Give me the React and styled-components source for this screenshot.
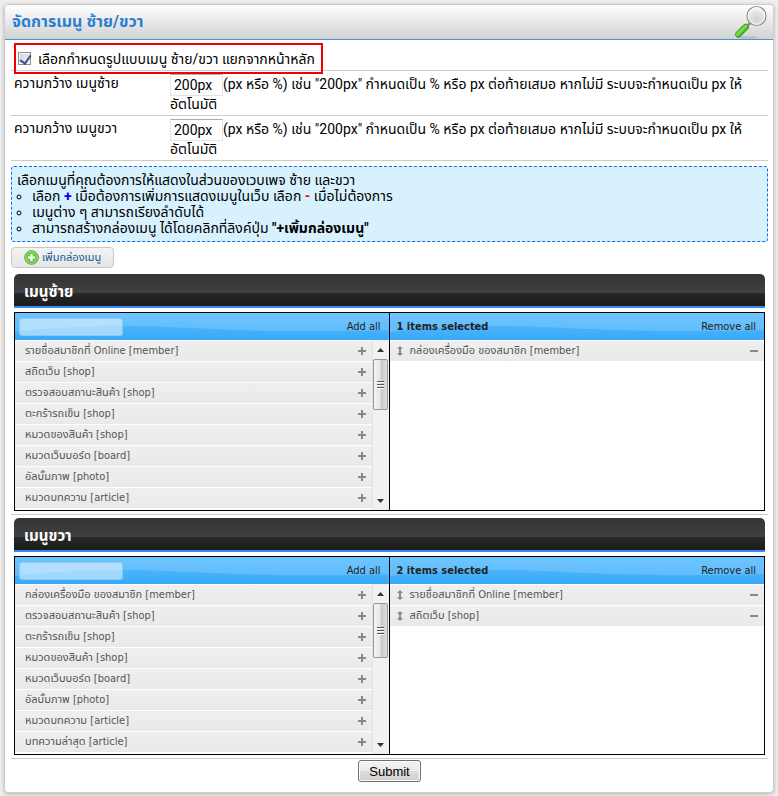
import { useState } from 'react';
import styled, { createGlobalStyle } from 'styled-components';

const leftItems = [
  'รายชื่อสมาชิกที่ Online [member]',
  'สถิตเว็บ [shop]',
  'ตรวจสอบสถานะสินค้า [shop]',
  'ตะกร้ารถเข็น [shop]',
  'หมวดของสินค้า [shop]',
  'หมวดเว็บบอร์ด [board]',
  'อัลบั้มภาพ [photo]',
  'หมวดบทความ [article]',
];

const rightItems = [
  'กล่องเครื่องมือ ของสมาชิก [member]',
  'ตรวจสอบสถานะสินค้า [shop]',
  'ตะกร้ารถเข็น [shop]',
  'หมวดของสินค้า [shop]',
  'หมวดเว็บบอร์ด [board]',
  'อัลบั้มภาพ [photo]',
  'หมวดบทความ [article]',
  'บทความล่าสุด [article]',
];

const SearchIcon = () => (
  <svg width="34" height="34" viewBox="0 0 34 34" aria-hidden="true">
    <defs>
      <radialGradient id="lens" cx="0.5" cy="0.7" r="0.7">
        <stop offset="0" stopColor="#d2d2d2" />
        <stop offset="0.6" stopColor="#e6e6e6" />
        <stop offset="1" stopColor="#ffffff" />
      </radialGradient>
      <linearGradient id="handle" x1="0.3" y1="0.3" x2="0.7" y2="0.7">
        <stop offset="0" stopColor="#3aa818" />
        <stop offset="0.4" stopColor="#86e650" />
        <stop offset="1" stopColor="#2c8a10" />
      </linearGradient>
    </defs>
    <ellipse cx="13" cy="32.500" rx="11" ry="1" fill="#b8b8b8" />
    <path d="M12 22 L17 17" stroke="#8a8a8a" strokeWidth="2.500" />
    <path d="M2.2 27.500 L10 19.600 Q11.800 18.300 13.700 20 Q15.300 21.800 14 23.600 L6.300 31.400 Q4 33 2.200 31.400 Q.6 29.600 2.200 27.500Z" fill="url(#handle)" stroke="#3b9618" strokeWidth="1" />
    <circle cx="22.500" cy="11" r="9.500" fill="url(#lens)" stroke="#8c8c8c" strokeWidth="1.200" />
    <circle cx="22.500" cy="11" r="8.300" fill="none" stroke="#f8f8f8" strokeWidth="1" />
  </svg>
);

const AddIcon = () => (
  <svg width="15" height="15" viewBox="0 0 15 15" aria-hidden="true">
    <circle cx="7.500" cy="7.500" r="6.800" fill="#6cc644" stroke="#4fa83a" />
    <circle cx="7.500" cy="7.500" r="5.700" fill="none" stroke="#a4e382" />
    <path d="M7.500 4v7M4 7.500h7" stroke="#fff" strokeWidth="2.200" />
  </svg>
);

const Wave = () => (
  <WaveSvg viewBox="0 0 374 27" preserveAspectRatio="none" aria-hidden="true">
    <defs>
      <linearGradient id="wave" x1="0" y1="0" x2="0" y2="1">
        <stop offset="0" stopColor="#4bb4f9" />
        <stop offset="1" stopColor="#38a9f9" />
      </linearGradient>
    </defs>
    <path d="M0 19 C20 16 60 13 110 13 C160 13 200 18 290 18 C330 18 350 18 374 17 V27 H0Z" fill="url(#wave)" />
  </WaveSvg>
);

const PlusIcon = () => (
  <svg width="8" height="8" viewBox="0 0 8 8" aria-hidden="true">
    <path d="M3 0h2v3h3v2H5v3H3V5H0V3h3z" fill="#888" />
  </svg>
);

const MinusIcon = () => (
  <svg width="8" height="8" viewBox="0 0 8 8" aria-hidden="true">
    <path d="M0 3h8v2H0z" fill="#888" />
  </svg>
);

const SortIcon = () => (
  <svg width="6" height="10" viewBox="0 0 6 10" aria-hidden="true">
    <path d="M3 0L6 3H4v4h2L3 10L0 7h2V3H0z" fill="#888" />
  </svg>
);

const ScrollBar = ({ thumb }) => (
  <Track>
    <Arrow>
      <svg width="7" height="4" viewBox="0 0 7 4"><path d="M0 4L3.500 0L7 4z" fill="#333" /></svg>
    </Arrow>
    <Thumb $height={thumb}>
      <i />
      <i />
      <i />
    </Thumb>
    <Spacer />
    <Arrow>
      <svg width="7" height="4" viewBox="0 0 7 4"><path d="M0 0h7L3.500 4z" fill="#333" /></svg>
    </Arrow>
  </Track>
);

const MenuPicker = ({ title, available, selected, thumb }) => (
  <Section>
    <SectionTitle>{title}</SectionTitle>
    <Picker>
      <Pane>
        <PaneHead>
          <Wave />
          <SearchInput type="text" aria-label={title} />
          <HeadLink href="#">Add all</HeadLink>
        </PaneHead>
        <PaneBody>
          <List>
            {available.map((item) => (
              <Item key={item}>
                <span>{item}</span>
                <IconButton type="button" aria-label={item}><PlusIcon /></IconButton>
              </Item>
            ))}
          </List>
          <ScrollBar thumb={thumb} />
        </PaneBody>
      </Pane>
      <Pane>
        <PaneHead>
          <Wave />
          <Count>{selected.length} items selected</Count>
          <HeadLink href="#">Remove all</HeadLink>
        </PaneHead>
        <PaneBody>
          <List>
            {selected.map((item) => (
              <Item key={item} $sortable>
                <SortIcon />
                <span>{item}</span>
                <IconButton type="button" aria-label={item}><MinusIcon /></IconButton>
              </Item>
            ))}
          </List>
        </PaneBody>
      </Pane>
    </Picker>
  </Section>
);

const WidthRow = ({ id, label }) => {
  const [width, setWidth] = useState('200px');

  return (
    <FormRow>
      <label htmlFor={id}>{label}</label>
      <div>
        <WidthInput id={id} value={width} onChange={(e) => setWidth(e.target.value)} />
        (px หรือ %) เช่น "200px" กำหนดเป็น % หรือ px ต่อท้ายเสมอ หากไม่มี ระบบจะกำหนดเป็น px ให้อัตโนมัติ
      </div>
    </FormRow>
  );
};

const App = () => {
  const [separate, setSeparate] = useState(true);

  return (
    <>
      <GlobalStyle />
      <Panel>
        <PanelHead>
          <h1>จัดการเมนู ซ้าย/ขวา</h1>
          <SearchIcon />
        </PanelHead>
        <Content>
          <CheckRow>
            <CheckLabel>
              <Checkbox type="checkbox" checked={separate} onChange={(e) => setSeparate(e.target.checked)} />
              เลือกกำหนดรูปแบบเมนู ซ้าย/ขวา แยกจากหน้าหลัก
            </CheckLabel>
          </CheckRow>
          <WidthRow id="width-left" label="ความกว้าง เมนูซ้าย" />
          <WidthRow id="width-right" label="ความกว้าง เมนูขวา" />
          <Notice>
            <p>เลือกเมนูที่คุณต้องการให้แสดงในส่วนของเวบเพจ ซ้าย และขวา</p>
            <ul>
              <li>เลือก <Mark $color="#0000ff">+</Mark> เมื่อต้องการเพิ่มการแสดงเมนูในเว็บ เลือก <Mark $color="#ff0000">-</Mark> เมื่อไม่ต้องการ</li>
              <li>เมนูต่าง ๆ สามารถเรียงลำดับได้</li>
              <li>สามารถสร้างกล่องเมนู ได้โดยคลิกที่ลิงค์ปุ่ม <b>"+เพิ้มกล่องเมนู"</b></li>
            </ul>
          </Notice>
          <AddButton type="button">
            <AddIcon />
            เพิ่มกล่องเมนู
          </AddButton>
          <MenuPicker title="เมนูซ้าย" available={leftItems} selected={['กล่องเครื่องมือ ของสมาชิก [member]']} thumb={51} />
          <MenuPicker title="เมนูขวา" available={rightItems} selected={['รายชื่อสมาชิกที่ Online [member]', 'สถิตเว็บ [shop]']} thumb={55} />
          <Submit type="submit">Submit</Submit>
        </Content>
      </Panel>
    </>
  );
};

export default App;

const GlobalStyle = createGlobalStyle`
  * {
    box-sizing: border-box;
  }

  body {
    margin: 0;
    padding: 4px 4px 3px;
    background: #efefef;
    color: #000;
    font-family: Roboto, "Noto Sans Thai", sans-serif;
    font-size: 14px;
    line-height: 16px;
  }

  button, input {
    font-family: inherit;
  }
`;

const Panel = styled.div`
  background: #fff;
  border: 1px solid #ccc;
  border-radius: 4px;
  box-shadow: 0 1px 4px #00000040;
`;

const PanelHead = styled.header`
  display: flex;
  align-items: center;
  justify-content: space-between;
  height: 35px;
  padding: 0 5px 0 7px;
  border-bottom: 1px solid #3c96e8;
  border-radius: 4px 4px 0 0;
  background: linear-gradient(#fff, #d2d2d2);

  & h1 {
    margin: 0;
    color: #2a7fd0;
    font-size: 16px;
    font-weight: bold;
    line-height: 24px;
  }
`;

const Content = styled.form`
  display: flex;
  flex-direction: column;
  padding: 0 5px 10px 6px;
`;

const CheckRow = styled.div`
  height: 31px;
  padding: 3px;
  border-bottom: 1px solid #ccc;
`;

const CheckLabel = styled.label`
  position: relative;
  display: inline-flex;
  align-items: center;
  gap: 7px;
  height: 31px;
  padding: 0 6px 0 2px;
  border: 2px solid #f00000;
`;

const Checkbox = styled.input`
  appearance: none;
  width: 13px;
  height: 13px;
  margin: 0;
  border: 1px solid #8e8f8f;
  background: linear-gradient(135deg, #cfd3d8, #f6f6f6);
  box-shadow: inset 0 0 0 1px #f4f4f4;

  &:checked::after {
    content: "";
    display: block;
    width: 5px;
    height: 9px;
    margin: 0 0 0 3px;
    border: solid #3b4f92;
    border-width: 0 2px 2px 0;
    transform: rotate(35deg);
  }
`;

const FormRow = styled.div`
  display: grid;
  grid-template-columns: 156px 1fr;
  height: 45px;
  padding: 3px;
  border-bottom: 1px solid #ccc;

  & > label {
    padding-top: 1px;
  }
`;

const WidthInput = styled.input`
  width: 53px;
  height: 22px;
  padding: 0 3px;
  border: 1px solid #e2e3ea;
  border-top-color: #abadb3;
  font-size: 14px;
  vertical-align: middle;
`;

const Notice = styled.div`
  margin-top: 5px;
  padding: 5px;
  border: 1px dashed #0a6cf0;
  border-radius: 3px;
  background: #d7f2fe;

  & p {
    margin: 0;
  }

  & ul {
    margin: 0;
    padding-left: 15px;
    list-style: circle;
  }
`;

const Mark = styled.b`
  color: ${({ $color }) => $color};
`;

const AddButton = styled.button`
  display: flex;
  align-items: center;
  align-self: flex-start;
  gap: 3px;
  height: 21px;
  margin: 5px 0 6px;
  padding: 0 12px;
  border: 1px solid #c8c8c8;
  border-radius: 4px;
  background: linear-gradient(#f3f3f3, #e6e6e6);
  color: #0f5a9c;
  font-size: 11px;
`;

const Section = styled.section`
  margin-bottom: 3px;
  padding: 0 3px 3px;
  border-bottom: 1px solid #ccc;
`;

const SectionTitle = styled.h2`
  height: 34px;
  margin: 0 0 4px;
  padding: 2px 10px 0;
  border-bottom: 2px solid #3a87f0;
  border-radius: 5px 5px 0 0;
  background: linear-gradient(#333, #404040 58%, #282828 60%, #1b1b1b);
  color: #fff;
  font-size: 15px;
  font-weight: bold;
  line-height: 32px;
`;

const Picker = styled.div`
  display: grid;
  grid-template-columns: 1fr 1fr;
  height: 199px;
  border: 1px solid #000;
  font-family: Tahoma, "DejaVu Sans Condensed", "Noto Sans Thai", sans-serif;
`;

const Pane = styled.div`
  display: flex;
  flex-direction: column;
  min-width: 0;
  overflow: hidden;

  &:first-child {
    border-right: 1px solid #000;
  }
`;

const PaneHead = styled.div`
  position: relative;
  display: flex;
  align-items: center;
  justify-content: space-between;
  height: 27px;
  padding: 0 8px 0 4px;
  background: linear-gradient(#6fc4fe, #58b9fa);
  font-size: 11px;
`;

const WaveSvg = styled.svg`
  position: absolute;
  inset: 0;
  width: 100%;
  height: 100%;
`;

const SearchInput = styled.input`
  position: relative;
  width: 104px;
  height: 18px;
  padding: 0 4px;
  border: 1px solid #8cc8f0;
  border-radius: 3px;
  background: #ffffff80;
`;

const HeadLink = styled.a`
  position: relative;
  color: #222;
  text-decoration: none;
`;

const Count = styled.strong`
  position: relative;
  padding-left: 3px;
  color: #222;
`;

const PaneBody = styled.div`
  display: flex;
  flex: 1;
  min-height: 0;
`;

const List = styled.ul`
  flex: 1;
  min-width: 0;
  margin: 0;
  padding: 0;
  list-style: none;
`;

const Item = styled.li`
  display: flex;
  align-items: center;
  gap: 7px;
  height: 21px;
  padding: 0 6px 0 ${({ $sortable }) => ($sortable ? 7 : 10)}px;
  border-top: 1px solid #fff;
  background: linear-gradient(#efefef, #e9e9e9);
  color: #555;
  font-size: 11px;
  white-space: nowrap;

  & span {
    flex: 1;
  }
`;

const IconButton = styled.button`
  display: flex;
  padding: 0;
  border: 0;
  background: none;
`;

const Track = styled.div`
  display: flex;
  flex-direction: column;
  width: 17px;
  border-left: 1px solid #e3e3e3;
  background: #f1f1f1;
`;

const Arrow = styled.div`
  display: flex;
  align-items: center;
  justify-content: center;
  height: 19px;
`;

const Thumb = styled.div`
  display: flex;
  flex-direction: column;
  align-items: center;
  justify-content: center;
  gap: 1px;
  height: ${({ $height }) => $height}px;
  margin-right: 1px;
  border: 1px solid #979797;
  border-radius: 2px;
  background: linear-gradient(90deg, #f5f5f5, #e6e6e8 48%, #c9cacc 52%, #dcdcdc);

  & i {
    width: 7px;
    height: 2px;
    border-bottom: 1px solid #fff;
    background: #555;
  }
`;

const Spacer = styled.div`
  flex: 1;
`;

const Submit = styled.button`
  align-self: center;
  height: 22px;
  margin-top: -2px;
  padding: 0 10px;
  border: 1px solid #707070;
  border-radius: 3px;
  background: linear-gradient(#f2f2f2, #ebebeb 50%, #dddddd 50%, #cfcfcf);
  box-shadow: inset 0 0 0 1px #fcfcfc;
  color: #000;
  font-family: "Liberation Sans", sans-serif;
  font-size: 13px;
`;
